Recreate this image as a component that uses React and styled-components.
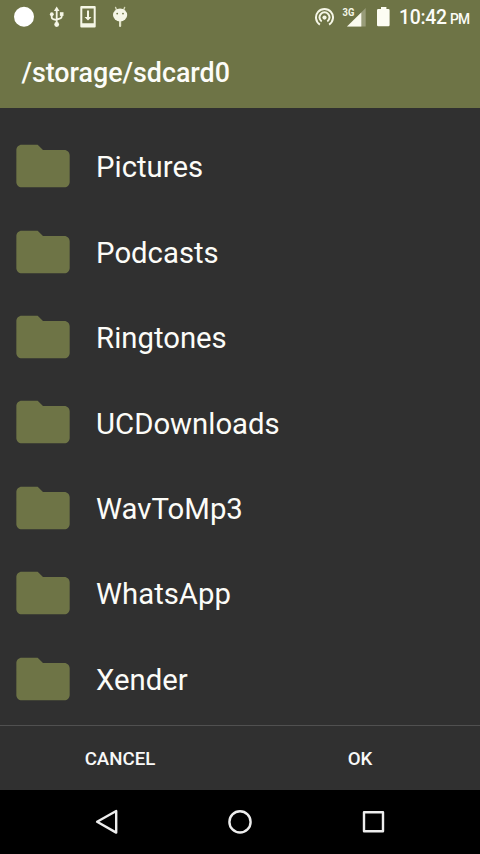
import React from "react";
import styled, { createGlobalStyle } from "styled-components";

const olive = "#6e7446";

const GlobalStyle = createGlobalStyle`
  * { box-sizing: border-box; }
  body { margin: 0; background: #303030; font-family: Roboto, sans-serif; }
`;

const Screen = styled.div`
  width: 480px;
  height: 854px;
  display: flex;
  flex-direction: column;
  overflow: hidden;
  background: #303030;
  color: #fcfcf8;
`;

const Header = styled.header`
  height: 108px;
  flex: none;
  background: ${olive};
`;

const StatusBar = styled.div`
  height: 34px;
  display: flex;
  align-items: center;
  justify-content: space-between;
  padding: 0 11px 0 13px;
`;

const StatusGroup = styled.div`
  display: flex;
  align-items: center;
  height: 34px;
`;

const Glyph = styled.svg`
  display: block;
  flex: none;
  margin-left: ${(p) => p.$gap || 0}px;
`;

const Clock = styled.time`
  width: 70px;
  margin-left: 9px;
  padding-top: 3px;
  font-size: 19.4px;
  font-weight: 500;
  letter-spacing: -0.3px;
  line-height: 24px;
  white-space: nowrap;
`;

const Meridiem = styled.span`
  margin-left: 3.4px;
  font-size: 13.8px;
  letter-spacing: -0.8px;
`;

const Path = styled.h1`
  margin: 0;
  padding: 23px 0 0 21.5px;
  font-size: 26.8px;
  font-weight: 500;
  line-height: 32px;
`;

const FolderList = styled.ul`
  flex: 1;
  min-height: 0;
  margin: 0;
  padding: 15.5px 0 0;
  list-style: none;
  overflow: hidden;
`;

const FolderRow = styled.li`
  height: 85.4px;
  display: flex;
  align-items: center;
  padding-left: 10.6px;
`;

const FolderName = styled.span`
  margin-left: 21.5px;
  padding-top: 2.4px;
  font-size: 29.3px;
  line-height: 36px;
`;

const Actions = styled.div`
  height: 65px;
  flex: none;
  display: grid;
  grid-template-columns: 1fr 1fr;
  border-top: 1px solid #505050;
`;

const ActionButton = styled.button`
  border: 0;
  padding: 1px 0 0;
  background: transparent;
  color: #f8f8f8;
  font: 500 18.7px/24px Roboto, sans-serif;
`;

const NavBar = styled.nav`
  height: 64px;
  flex: none;
  display: flex;
  align-items: center;
  justify-content: center;
  gap: 101.5px;
  background: #000;
`;

const FolderIcon = () => (
  <Glyph width="64" height="64" viewBox="0 0 24 24" fill={olive}>
    <path d="M10 4H4c-1.1 0-1.99.9-1.99 2L2 18c0 1.1.9 2 2 2h16c1.1 0 2-.9 2-2V8c0-1.1-.9-2-2-2h-8l-2-2z" />
  </Glyph>
);

const RecordDot = () => (
  <Glyph width="22" height="22" viewBox="0 0 22 22">
    <circle cx="11" cy="10.7" r="10" fill="#fff" />
  </Glyph>
);

const UsbIcon = () => (
  <Glyph $gap={14} width="16" height="22" viewBox="0 0 16 22" fill="#f5f6e6">
    <path d="M7.7.6 10.5 5H4.9z" />
    <path
      d="M7.7 4v14M2.7 8v3.3q0 1.5 1.4 1.8l3.6 1.1M12.7 8v2.6q0 1.5-1.4 1.8l-3.6 1.2"
      fill="none"
      stroke="#f5f6e6"
      strokeWidth="1.8"
    />
    <circle cx="2.8" cy="8.2" r="1.9" />
    <rect x="10.9" y="6.2" width="3.6" height="3.7" />
    <circle cx="7.7" cy="18.5" r="2.4" />
  </Glyph>
);

const DownloadIcon = () => (
  <Glyph $gap={15} width="16" height="22" viewBox="0 0 16 22" fill="#f5f6e6">
    <path fillRule="evenodd" d="M1.3 0h13.4q1 0 1 1v19.5q0 1-1 1H1.3q-1 0-1-1V1q0-1 1-1zM2.3 2.4v14.9h11.4V2.4z" />
    <path d="M7 4.5h2V11h2.5L8 14.6 4.5 11H7z" />
  </Glyph>
);

const BugdroidIcon = () => (
  <Glyph $gap={16} width="16" height="22" viewBox="0 0 16 22">
    <path d="m3.6 1.4 1 2.8M12.6 1.4l-1 2.8" stroke="#d4d7b9" strokeWidth="1.4" strokeLinecap="round" />
    <path d="M8.1 14v6" stroke="#dfe1c6" strokeWidth="2.2" strokeLinecap="round" />
    <ellipse cx="8.1" cy="9" rx="7.1" ry="6.5" fill="#f5f6e6" />
    <circle cx="5.2" cy="7.6" r="0.9" fill={olive} />
    <circle cx="11" cy="7.6" r="0.9" fill={olive} />
  </Glyph>
);

const HotspotIcon = () => (
  <Glyph width="20" height="20" viewBox="0 0 20 20" fill="none" stroke="#f5f6e6" strokeWidth="2">
    <path d="M5.9 17.6a8.5 8.5 0 1 1 9.2 0M7.7 14.5a5 5 0 1 1 5.6 0" />
    <circle cx="10.5" cy="10.6" r="2.1" fill="#f5f6e6" stroke="none" />
  </Glyph>
);

const SignalIcon = () => (
  <Glyph $gap={7} width="25" height="22" viewBox="0 0 25 22">
    <path d="M24.7 2v18.5H6z" fill="#989c79" />
    <path d="M20.3 6.4v14.1H6z" fill="#fafaee" />
    <text
      x="1.6"
      y="10"
      fill="#f5f6e6"
      fontFamily="Roboto, sans-serif"
      fontSize="11"
      fontWeight="700"
      textLength="11.8"
      lengthAdjust="spacingAndGlyphs"
    >
      3G
    </text>
  </Glyph>
);

const BatteryIcon = () => (
  <Glyph $gap={10} width="14" height="20" viewBox="0 0 14 20" fill="#fdfdf3">
    <path d="M5 0h5.4v2h2q1.2 0 1.2 1.2V18q0 1.2-1.2 1.2H2.2Q1 19.2 1 18V3.2Q1 2 2.2 2H5z" />
  </Glyph>
);

const NavIcon = ({ children }) => (
  <Glyph width="32" height="32" viewBox="0 0 32 32" fill="none" stroke="#ededed" strokeWidth="2.4" strokeLinejoin="round">
    {children}
  </Glyph>
);

const folders = ["Pictures", "Podcasts", "Ringtones", "UCDownloads", "WavToMp3", "WhatsApp", "Xender"];

export default function App() {
  return (
    <Screen>
      <GlobalStyle />
      <Header>
        <StatusBar>
          <StatusGroup>
            <RecordDot />
            <UsbIcon />
            <DownloadIcon />
            <BugdroidIcon />
          </StatusGroup>
          <StatusGroup>
            <HotspotIcon />
            <SignalIcon />
            <BatteryIcon />
            <Clock>
              10:42<Meridiem>PM</Meridiem>
            </Clock>
          </StatusGroup>
        </StatusBar>
        <Path>/storage/sdcard0</Path>
      </Header>
      <FolderList>
        {folders.map((name) => (
          <FolderRow key={name}>
            <FolderIcon />
            <FolderName>{name}</FolderName>
          </FolderRow>
        ))}
      </FolderList>
      <Actions>
        <ActionButton>CANCEL</ActionButton>
        <ActionButton>OK</ActionButton>
      </Actions>
      <NavBar>
        <NavIcon>
          <path d="M25.2 5v21.6L6.1 15.8z" />
        </NavIcon>
        <NavIcon>
          <circle cx="16" cy="15.9" r="10.6" />
        </NavIcon>
        <NavIcon>
          <rect x="6" y="6.3" width="19" height="19" />
        </NavIcon>
      </NavBar>
    </Screen>
  );
}
